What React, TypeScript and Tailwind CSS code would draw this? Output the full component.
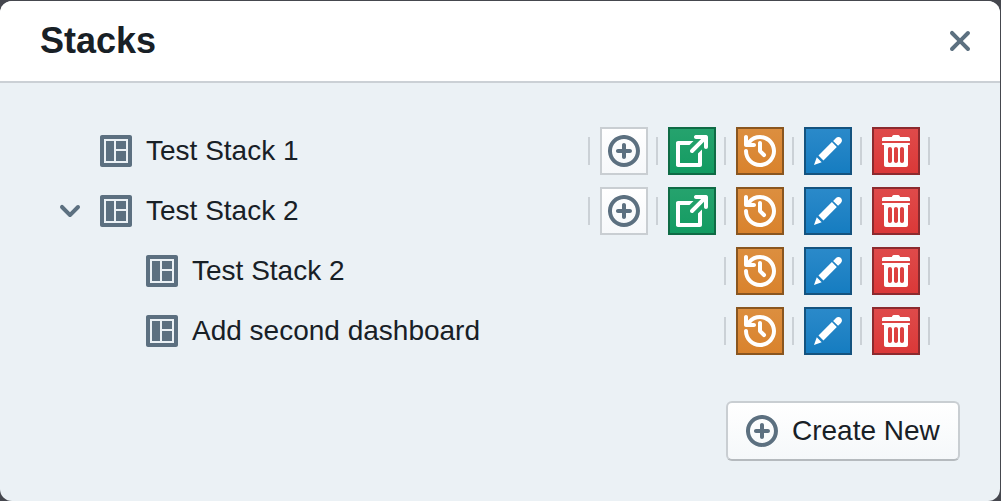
import React from "react";

const icons = {
  add: "M10.99 6.99h-2v-2c0-.55-.45-1-1-1s-1 .45-1 1v2h-2c-.55 0-1 .45-1 1s.45 1 1 1h2v2c0 .55.45 1 1 1s1-.45 1-1v-2h2c.55 0 1-.45 1-1s-.45-1-1-1zm-3-7c-4.42 0-8 3.58-8 8s3.58 8 8 8 8-3.58 8-8-3.58-8-8-8zm0 14c-3.31 0-6-2.69-6-6s2.69-6 6-6 6 2.69 6 6-2.69 6-6 6z",
  share: "M10.99 13.99h-9v-9h4.76l2-2H.99c-.55 0-1 .45-1 1v11c0 .55.45 1 1 1h11c.55 0 1-.45 1-1V7.24l-2 2v4.75zm4-14h-5c-.55 0-1 .45-1 1s.45 1 1 1h2.59L7.29 7.28a1 1 0 00-.3.71 1.003 1.003 0 001.71.71l5.29-5.29V6c0 .55.45 1 1 1s1-.45 1-1V1c0-.56-.45-1.01-1-1.01z",
  history: "M8 3c-.55 0-1 .45-1 1v4c0 .28.11.53.29.71l2 2a1.003 1.003 0 001.42-1.42L9 7.59V4c0-.55-.45-1-1-1zm0-3a7.95 7.95 0 00-6 2.74V1c0-.55-.45-1-1-1S0 .45 0 1v4c0 .55.45 1 1 1h4c.55 0 1-.45 1-1s-.45-1-1-1H3.54C4.64 2.78 6.23 2 8 2c3.31 0 6 2.69 6 6s-2.69 6-6 6-6-2.69-6-6c0-.55-.45-1-1-1s-1 .45-1 1c0 4.42 3.58 8 8 8s8-3.58 8-8-3.58-8-8-8z",
  edit: "M3.25 10.26l2.47 2.47 6.69-6.69-2.46-2.48-6.7 6.7zM.99 14.99l3.86-1.39-2.46-2.44-1.4 3.83zm12.25-14c-.48 0-.92.2-1.24.51l-1.44 1.44 2.47 2.47 1.44-1.44c.32-.32.51-.75.51-1.24.01-.95-.77-1.74-1.74-1.74z",
  trash: "M14.49 3.99h-13c-.28 0-.5.22-.5.5s.22.5.5.5h.5v10c0 .55.45 1 1 1h10c.55 0 1-.45 1-1v-10h.5c.28 0 .5-.22.5-.5s-.22-.5-.5-.5zm-8.5 9c0 .55-.45 1-1 1s-1-.45-1-1v-6c0-.55.45-1 1-1s1 .45 1 1v6zm3 0c0 .55-.45 1-1 1s-1-.45-1-1v-6c0-.55.45-1 1-1s1 .45 1 1v6zm3 0c0 .55-.45 1-1 1s-1-.45-1-1v-6c0-.55.45-1 1-1s1 .45 1 1v6zm2-12h-4c0-.55-.45-1-1-1h-2c-.55 0-1 .45-1 1h-4c-.55 0-1 .45-1 1v1h14v-1c0-.55-.45-1-1-1z",
  control: "M13 8H8v5h5V8zm0-5H8v4h5V3zm2-3H1C.45 0 0 .45 0 1v14c0 .55.45 1 1 1h14c.55 0 1-.45 1-1V1c0-.55-.45-1-1-1zm-1 14H2V2h12v12zM7 3H3v10h4V3z",
  chevron: "M12 5c-.28 0-.53.11-.71.29L8 8.59l-3.29-3.3a1.003 1.003 0 00-1.42 1.42l4 4c.18.18.43.29.71.29s.53-.11.71-.29l4-4A1.003 1.003 0 0012 5z",
};

type IconName = keyof typeof icons;

function Icon({ name }: { name: IconName }) {
  return (
    <svg viewBox="0 0 16 16" className="block size-8 shrink-0" fill="currentColor" fillRule="evenodd" aria-hidden="true">
      <path d={icons[name]} />
    </svg>
  );
}

const actionStyles: { icon: IconName; label: string; tone: string }[] = [
  { icon: "add", label: "Add", tone: "border-[#c9ced2] from-white to-[#f6f8fa] text-[#5c7080]" },
  { icon: "share", label: "Open", tone: "border-[#0f6b45] from-[#26a36e] to-[#109b61] text-white" },
  { icon: "history", label: "History", tone: "border-[#8a561f] from-[#dc8f40] to-[#d9822b] text-white" },
  { icon: "edit", label: "Edit", tone: "border-[#14537f] from-[#2b8aca] to-[#147cc0] text-white" },
  { icon: "trash", label: "Delete", tone: "border-[#8c2a2e] from-[#df4b4b] to-[#db3737] text-white" },
];

function Divider() {
  return <span className="h-7 w-0.5 bg-[#cbd1d6]" />;
}

function Actions({ full }: { full?: boolean }) {
  const shown = full ? actionStyles : actionStyles.slice(2);
  return (
    <div className="ml-auto flex items-center">
      <Divider />
      {shown.map((a) => (
        <React.Fragment key={a.icon}>
          <button
            aria-label={a.label}
            className={`mr-2 ml-2.5 flex size-12 items-center justify-center border-2 bg-linear-to-b bg-origin-border ${a.tone}`}
          >
            <Icon name={a.icon} />
          </button>
          <Divider />
        </React.Fragment>
      ))}
    </div>
  );
}

function Row({ label, nested, open }: { label: string; nested?: boolean; open?: boolean }) {
  return (
    <li className={`flex h-[60px] items-center pr-[70px] text-[#5c7080] ${nested ? "pl-[146px]" : "pl-[54px]"}`}>
      {!nested && <span className="mr-3.5 size-8">{open && <Icon name="chevron" />}</span>}
      <Icon name="control" />
      <span className="ml-3.5 text-[28px] leading-9 text-[#182026]">{label}</span>
      <Actions full={!nested} />
    </li>
  );
}

export default function App() {
  return (
    <div className="h-[501px] w-[1001px] overflow-hidden bg-[#45474e] pt-px pr-px font-['Liberation_Sans',Arial,sans-serif]">
      <div className="flex h-[500px] flex-col overflow-hidden rounded-xl bg-[#ebf1f5]">
        <header className="flex h-[82px] shrink-0 items-center justify-between border-b-2 border-[#cbd0d5] bg-white pr-5 pl-10">
          <h1 className="text-[36px] leading-10 font-bold text-[#182026]">Stacks</h1>
          <button aria-label="Close" className="text-[#5c7080]">
            <svg viewBox="0 0 20 20" className="block size-10" fill="currentColor" aria-hidden="true">
              <path d="M11.41 10l3.29-3.29c.19-.18.3-.43.3-.71a1.003 1.003 0 00-1.71-.71L10 8.59l-3.29-3.3a1.003 1.003 0 00-1.42 1.42L8.59 10 5.3 13.29c-.19.18-.3.43-.3.71a1.003 1.003 0 001.71.71l3.29-3.3 3.29 3.29c.18.19.43.3.71.3a1.003 1.003 0 00.71-1.71L11.41 10z" />
            </svg>
          </button>
        </header>
        <ul className="pt-[38px]">
          <Row label="Test Stack 1" />
          <Row label="Test Stack 2" open />
          <Row label="Test Stack 2" nested />
          <Row label="Add second dashboard" nested />
        </ul>
        <footer className="flex justify-end pt-10 pr-10">
          <button className="flex h-[60px] w-[234px] items-center rounded-md border-2 border-[#c9ced2] border-b-[#b5babe] bg-linear-to-b from-white to-[#f5f8fa] pl-[18px] text-[#5c7080]">
            <Icon name="add" />
            <span className="ml-3.5 text-[28px] leading-9 whitespace-nowrap text-[#182026]">Create New</span>
          </button>
        </footer>
      </div>
    </div>
  );
}
